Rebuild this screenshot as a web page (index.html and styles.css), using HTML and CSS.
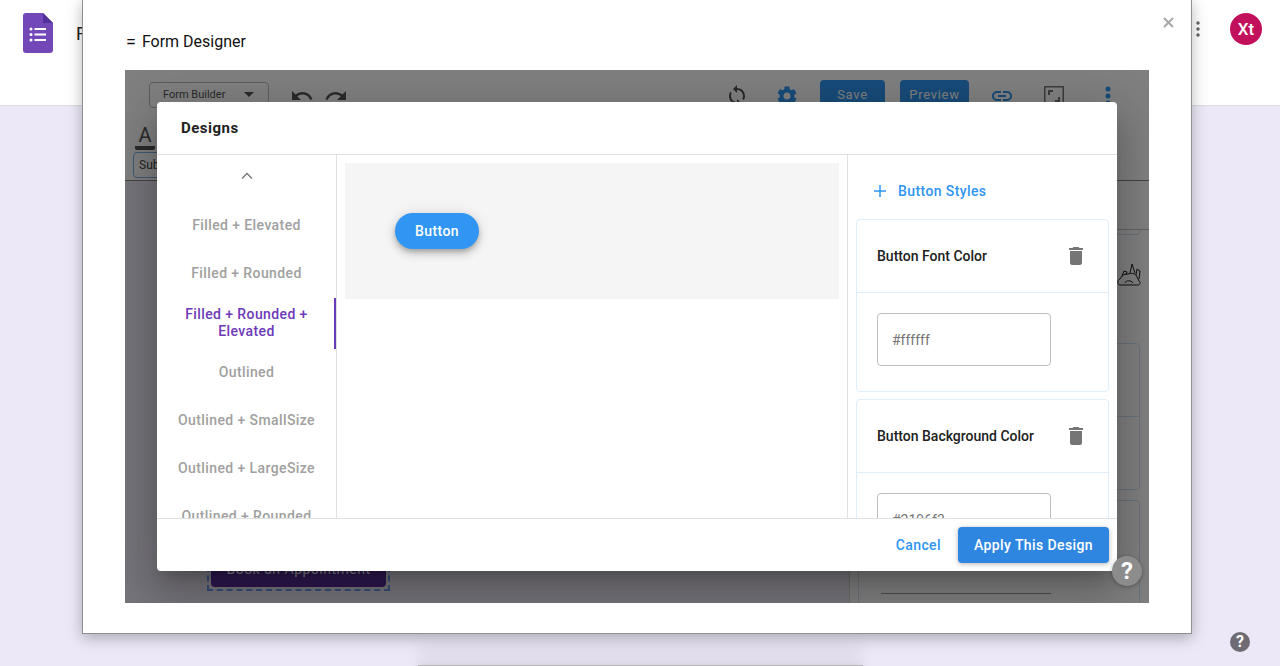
FILE: index.html
```html
<!DOCTYPE html>
<html lang="en">
<head>
  <meta charset="UTF-8">
  <title>Form Designer</title>
  <link rel="stylesheet" href="styles.css">
</head>
<body>
  <header class="topbar">
    <div class="topbar-left">
      <svg class="forms-logo" viewBox="0 0 30 40">
        <path d="M3 0h17l10 10v27a3 3 0 0 1-3 3H3a3 3 0 0 1-3-3V3a3 3 0 0 1 3-3z" fill="#7248b9"/>
        <path d="M20 0l10 10H20z" fill="#52309a"/>
        <g fill="#fff">
          <circle cx="8" cy="16" r="1.500"/><circle cx="8" cy="21.500" r="1.500"/><circle cx="8" cy="27" r="1.500"/>
          <rect x="11.500" y="15" width="11.500" height="2"/><rect x="11.500" y="20.500" width="11.500" height="2"/><rect x="11.500" y="26" width="11.500" height="2"/>
        </g>
      </svg>
      <span class="doc-title">Request Form</span>
    </div>
    <div class="topbar-right">
      <svg class="topbar-dots" viewBox="0 0 4 16"><circle cx="2" cy="2" r="1.700"/><circle cx="2" cy="8" r="1.700"/><circle cx="2" cy="14" r="1.700"/></svg>
      <div class="avatar">Xt</div>
    </div>
  </header>

  <main class="page">
    <div class="sheet"></div>
  </main>
  <div class="page-help">?</div>

  <div class="window">
    <svg class="window-close" viewBox="0 0 12 12"><path d="M1 1l10 10M11 1L1 11"/></svg>
    <div class="window-title"><span class="title-mark">=</span><span>Form Designer</span></div>

    <div class="preview">
      <div class="builder">
        <div class="toolbar">
          <div class="toolbar-row">
            <div class="toolbar-left">
              <div class="mode-select">Form Builder<span class="select-caret"></span></div>
              <svg class="tool-icon undo" viewBox="0 0 24 24"><path d="M12.5 8c-2.650 0-5.050.99-6.900 2.600L2 7v9h9l-3.620-3.620c1.390-1.160 3.160-1.880 5.120-1.880 3.540 0 6.550 2.310 7.600 5.500l2.370-.78C21.080 11.030 17.150 8 12.500 8z"/></svg>
              <svg class="tool-icon redo" viewBox="0 0 24 24"><path d="M18.400 10.600C16.550 8.990 14.150 8 11.500 8c-4.650 0-8.580 3.030-9.960 7.220L3.900 16c1.050-3.190 4.050-5.500 7.600-5.500 1.950 0 3.730.72 5.120 1.880L13 16h9V7l-3.600 3.600z"/></svg>
            </div>
            <div class="toolbar-right">
              <svg class="tool-icon" viewBox="0 0 24 24"><path d="M12 4V1L8 5l4 4V6c3.310 0 6 2.690 6 6 0 1.010-.25 1.970-.7 2.800l1.460 1.460C19.540 15.030 20 13.570 20 12c0-4.420-3.580-8-8-8zm0 14c-3.310 0-6-2.690-6-6 0-1.010.25-1.970.7-2.800L5.240 7.740C4.460 8.970 4 10.430 4 12c0 4.420 3.580 8 8 8v3l4-4-4-4v3z"/></svg>
              <svg class="tool-icon blue gear" viewBox="0 0 24 24"><path d="M19.140 12.940c.04-.3.06-.61.06-.94 0-.32-.02-.64-.07-.94l2.030-1.580c.18-.14.23-.41.12-.61l-1.920-3.320c-.12-.22-.37-.29-.59-.22l-2.390.96c-.5-.38-1.030-.7-1.620-.94l-.36-2.540c-.04-.24-.24-.41-.48-.41h-3.840c-.24 0-.43.17-.47.41l-.36 2.540c-.59.24-1.130.57-1.620.94l-2.390-.96c-.22-.08-.47 0-.59.22L2.740 8.870c-.12.21-.08.47.12.61l2.030 1.580c-.05.3-.09.63-.09.94s.02.64.07.94l-2.030 1.580c-.18.14-.23.41-.12.61l1.920 3.320c.12.22.37.29.59.22l2.390-.96c.5.38 1.030.7 1.620.94l.36 2.540c.05.24.24.41.48.41h3.840c.24 0 .44-.17.47-.41l.36-2.540c.59-.24 1.130-.56 1.620-.94l2.390.96c.22.08.47 0 .59-.22l1.920-3.320c.12-.22.07-.47-.12-.61l-2.010-1.580zM12 15.600c-1.980 0-3.600-1.620-3.600-3.600s1.620-3.600 3.600-3.600 3.600 1.620 3.600 3.600-1.620 3.600-3.600 3.600z"/></svg>
              <div class="tool-btn save">Save</div>
              <div class="tool-btn preview-btn">Preview</div>
              <svg class="tool-icon blue link" viewBox="0 0 24 24"><path d="M3.900 12c0-1.710 1.390-3.100 3.100-3.100h4V7H7c-2.760 0-5 2.240-5 5s2.240 5 5 5h4v-1.900H7c-1.710 0-3.100-1.390-3.100-3.100zM8 13h8v-2H8v2zm9-6h-4v1.900h4c1.710 0 3.100 1.390 3.100 3.100s-1.390 3.100-3.100 3.100h-4V17h4c2.760 0 5-2.240 5-5s-2.240-5-5-5z"/></svg>
              <svg class="tool-icon full" viewBox="0 0 24 24"><path d="M2 2h20v20H2zM3.500 3.500v17h17v-17zM6 6h5v2H8v3H6zM18 18h-5v-2h3v-3h2z" fill-rule="evenodd"/></svg>
              <svg class="tool-icon blue more" viewBox="0 0 24 24"><circle cx="12" cy="5" r="2.500"/><circle cx="12" cy="12" r="2.500"/><circle cx="12" cy="19" r="2.500"/></svg>
            </div>
          </div>
          <div class="font-tool"><span class="font-a">A</span></div>
          <div class="font-select">Sub</div>
        </div>

        <div class="canvas-row">
          <div class="canvas">
            <div class="book-outline"><div class="book-btn">Book an Appointment</div></div>
          </div>
          <div class="props">
            <div class="prop-rule"></div>
            <div class="prop-card prop-top"></div>
            <div class="prop-icon-row">
              <svg class="prop-icon" viewBox="0 0 24 24">
                <path d="M3 23c-3 0-3-5 0-6l2-3c2-2 4-2 6-2 3-1 6-1 8 1l3 6c2 1 1 4-1 4z"/>
                <path d="M8 21c1-3 6-3 8 0"/>
                <path d="M5 14l2-5 3 1-1 3M13 11l2-9 3 9M19 13l1-6 3 2-1 8"/>
              </svg>
            </div>
            <div class="prop-card prop-mid">
              <div class="prop-divider"></div>
            </div>
            <div class="prop-card prop-end">
              <div class="prop-line"></div>
            </div>
          </div>
        </div>
      </div>
      <div class="scrim"></div>

      <div class="dialog">
        <div class="dialog-head">Designs</div>
        <div class="dialog-body">
          <div class="tabs">
            <div class="tabs-up">
              <svg class="chevron" viewBox="0 0 12 8"><path d="M1 6.500l5-5 5 5"/></svg>
            </div>
            <div class="tab">Filled + Elevated</div>
            <div class="tab">Filled + Rounded</div>
            <div class="tab active">Filled + Rounded + Elevated</div>
            <div class="tab">Outlined</div>
            <div class="tab">Outlined + SmallSize</div>
            <div class="tab">Outlined + LargeSize</div>
            <div class="tab">Outlined + Rounded</div>
          </div>

          <div class="stage">
            <div class="stage-box">
              <div class="demo-btn">Button</div>
            </div>
          </div>

          <div class="styles">
            <div class="styles-head">
              <svg class="plus" viewBox="0 0 12 12"><path d="M6 0v12M0 6h12"/></svg>
              <span>Button Styles</span>
            </div>
            <div class="style-card">
              <div class="style-card-head">
                <span>Button Font Color</span>
                <svg class="trash" viewBox="0 0 24 24"><path d="M6 19c0 1.100.9 2 2 2h8c1.100 0 2-.9 2-2V7H6v12zM19 4h-3.500l-1-1h-5l-1 1H5v2h14V4z"/></svg>
              </div>
              <div class="style-card-body"><input class="color-input" type="text" value="#ffffff" readonly></div>
            </div>
            <div class="style-card">
              <div class="style-card-head">
                <span>Button Background Color</span>
                <svg class="trash" viewBox="0 0 24 24"><path d="M6 19c0 1.100.9 2 2 2h8c1.100 0 2-.9 2-2V7H6v12zM19 4h-3.500l-1-1h-5l-1 1H5v2h14V4z"/></svg>
              </div>
              <div class="style-card-body"><input class="color-input" type="text" value="#2196f3" readonly></div>
            </div>
          </div>
        </div>
        <div class="dialog-foot">
          <span class="cancel">Cancel</span>
          <div class="apply">Apply This Design</div>
        </div>
      </div>

      <div class="float-help">?</div>
    </div>
  </div>
</body>
</html>
```

FILE: styles.css
```css
* {
  box-sizing: border-box;
}
html, body {
  height: 666px;
  overflow: hidden;
}
body {
  margin: 0;
  background-color: #ece8f7;
  font-family: Roboto, "Liberation Sans", sans-serif;
  color: #212121;
  position: relative;
}

/* page behind the popup */
.topbar {
  display: flex;
  justify-content: space-between;
  align-items: flex-start;
  height: 106px;
  padding: 13px 18px 0 23px;
  background: white;
  border-bottom: 1px solid #dadce0;
}
.topbar-left {
  display: flex;
  align-items: center;
  gap: 23px;
}
.forms-logo {
  width: 30px;
  height: 40px;
}
.doc-title {
  font-size: 18px;
  white-space: nowrap;
}
.topbar-right {
  display: flex;
  align-items: center;
  gap: 30px;
}
.topbar-dots {
  width: 4px;
  height: 16px;
  fill: #5f6368;
}
.avatar {
  width: 32px;
  height: 32px;
  border-radius: 50%;
  background: #c2105c;
  color: white;
  font-size: 17px;
  font-weight: 500;
  line-height: 32px;
  text-align: center;
}
.page {
  display: flex;
  justify-content: center;
  padding-top: 559px;
}
.sheet {
  width: 445px;
  height: 20px;
  background: #b9b7bd;
  box-shadow: 0 -20px 14px rgba(0, 0, 0, 0.05), 0 0 8px rgba(0, 0, 0, 0.1);
}
.page-help {
  position: absolute;
  left: 1230px;
  top: 632px;
  width: 20px;
  height: 20px;
  border-radius: 50%;
  background: #6f6b75;
  color: white;
  font-size: 16px;
  font-weight: 700;
  line-height: 20px;
  text-align: center;
}

/* popup window */
.window {
  position: absolute;
  left: 82px;
  top: -1px;
  width: 1110px;
  height: 635px;
  padding: 0 42px;
  background: white;
  border: 1px solid #8f8f94;
  box-shadow: 0 4px 14px rgba(0, 0, 0, 0.28);
}
.window-close {
  position: absolute;
  right: 17px;
  top: 17px;
  width: 11px;
  height: 11px;
  fill: none;
  stroke: #a8a8a8;
  stroke-width: 2.200;
}
.window-title {
  display: flex;
  gap: 6px;
  height: 70px;
  padding: 32px 0 0 1px;
  font-size: 16px;
  line-height: 20px;
  color: #111;
}
.title-mark {
  font-size: 18px;
}
.preview {
  position: relative;
  height: 533px;
  overflow: hidden;
}
.scrim {
  position: absolute;
  inset: 0;
  background: rgba(0, 0, 0, 0.5);
}

/* builder under the scrim */
.builder {
  display: flex;
  flex-direction: column;
  height: 100%;
}
.toolbar {
  height: 111px;
  padding: 10px 29px 0 24px;
  background: white;
  border-bottom: 1px solid #888;
}
.toolbar-row {
  display: flex;
  justify-content: space-between;
  height: 32px;
}
.toolbar-left, .toolbar-right {
  display: flex;
  align-items: flex-start;
}
.mode-select {
  display: flex;
  justify-content: space-between;
  align-items: center;
  width: 120px;
  height: 26px;
  margin-top: 2px;
  padding: 0 14px 2px 13px;
  border: 1px solid #bbb;
  border-radius: 4px;
  font-size: 11px;
  color: #555;
}
.select-caret {
  border-left: 5px solid transparent;
  border-right: 5px solid transparent;
  border-top: 5px solid #555;
}
.tool-icon {
  width: 24px;
  height: 24px;
  margin-top: 4px;
  fill: #555;
}
.tool-icon.undo {
  margin-left: 21px;
}
.tool-icon.redo {
  margin-left: 10px;
}
.tool-icon.blue {
  fill: #3196f3;
}
.tool-icon.gear {
  margin-left: 26px;
}
.tool-icon.link {
  margin-left: 21px;
}
.tool-icon.full {
  margin-left: 28px;
  fill: #777;
}
.tool-icon.more {
  margin-left: 30px;
}
.tool-btn {
  height: 32px;
  padding: 0;
  background: #3196f3;
  border-radius: 4px;
  color: white;
  font-size: 13px;
  font-weight: 400;
  letter-spacing: 0.7px;
  line-height: 30px;
  text-align: center;
}
.tool-btn.save {
  width: 65px;
  margin-left: 21px;
}
.tool-btn.preview-btn {
  width: 69px;
  margin-left: 15px;
}
.font-tool {
  height: 40px;
  margin-left: -14px;
  padding-top: 13px;
}
.font-a {
  display: inline-block;
  width: 20px;
  border-bottom: 4px solid #555;
  border-radius: 0 0 2px 2px;
  font-size: 20px;
  line-height: 21px;
  color: #555;
  text-align: center;
}
.font-select {
  width: 70px;
  height: 26px;
  margin-left: -16px;
  padding: 0 5px;
  border: 1px solid #7fb2e5;
  border-radius: 4px;
  font-size: 12px;
  line-height: 24px;
  color: #444;
}
.canvas-row {
  display: flex;
  flex: 1;
  min-height: 0;
}
.canvas {
  flex: 1;
  display: flex;
  flex-direction: column;
  justify-content: flex-end;
  align-items: flex-start;
  padding: 0 0 12px 82px;
  background: #ece8f7;
}
.book-outline {
  padding: 2px;
  border: 2px dashed #6b9ef0;
}
.book-btn {
  width: 175px;
  height: 36px;
  background: #5a2e9e;
  border-radius: 4px;
  color: white;
  font-size: 14px;
  font-weight: 400;
  letter-spacing: 0.5px;
  line-height: 36px;
  text-align: center;
}
.props {
  width: 300px;
  padding: 0 9px 0 8px;
  background: white;
  border-left: 1px solid #d8d8d8;
}
.prop-rule {
  height: 49px;
  margin: 0 -9px 0 -8px;
  border-bottom: 1px solid #c4c4c4;
}
.prop-card {
  border: 1px solid #d3e3f2;
  border-radius: 4px;
}
.prop-top {
  height: 5px;
  border-top: none;
  border-left: none;
  border-radius: 0 0 4px 0;
}
.prop-icon-row {
  display: flex;
  justify-content: flex-end;
  height: 108px;
  padding-top: 27px;
  margin-right: -1px;
}
.prop-icon {
  width: 24px;
  height: 24px;
  fill: none;
  stroke: #222;
  stroke-width: 1;
}
.prop-mid {
  height: 147px;
  padding-top: 72px;
}
.prop-divider {
  border-top: 1px solid #d3e3f2;
}
.prop-end {
  height: 130px;
  margin-top: 10px;
  padding: 92px 0 0 22px;
}
.prop-line {
  width: 170px;
  border-top: 1px solid #999;
}

/* designs dialog */
.dialog {
  position: absolute;
  left: 32px;
  top: 32px;
  display: flex;
  flex-direction: column;
  width: 960px;
  height: 469px;
  background: white;
  border-radius: 4px;
  box-shadow: 0 11px 15px -7px rgba(0, 0, 0, 0.2), 0 24px 38px 3px rgba(0, 0, 0, 0.14), 0 9px 46px 8px rgba(0, 0, 0, 0.12);
  overflow: hidden;
}
.dialog-head {
  height: 53px;
  padding: 0 24px;
  border-bottom: 1px solid #e0e0e0;
  font-size: 15px;
  font-weight: 700;
  letter-spacing: 0.5px;
  line-height: 52px;
}
.dialog-body {
  display: flex;
  flex: 1;
  min-height: 0;
}
.tabs {
  width: 180px;
  flex-shrink: 0;
  border-right: 1px solid #e0e0e0;
  overflow: hidden;
}
.tabs-up {
  display: flex;
  justify-content: center;
  height: 46px;
  padding-top: 17px;
}
.chevron {
  width: 12px;
  height: 8px;
  fill: none;
  stroke: #757575;
  stroke-width: 1.300;
}
.tab {
  display: flex;
  align-items: center;
  justify-content: center;
  height: 48px;
  padding: 0 20px;
  color: #a0a0a0;
  font-size: 14px;
  font-weight: 500;
  letter-spacing: 0.4px;
  line-height: 17px;
  text-align: center;
  white-space: nowrap;
}
.tab.active {
  height: 51px;
  margin: 1px 0 -1px;
  color: #6e39b8;
  border-right: 2px solid #673ab7;
  white-space: normal;
  padding: 0 18px 2px 20px;
}
.stage {
  flex: 1;
  padding: 8px;
  border-right: 1px solid #e0e0e0;
}
.stage-box {
  height: 136px;
  padding: 50px;
  background: #f5f5f5;
}
.demo-btn {
  width: 84px;
  height: 36px;
  background: #3196f3;
  border-radius: 18px;
  box-shadow: 0 3px 5px -1px rgba(0, 0, 0, 0.2), 0 5px 8px rgba(0, 0, 0, 0.14), 0 1px 14px rgba(0, 0, 0, 0.12);
  color: white;
  font-size: 14px;
  font-weight: 500;
  letter-spacing: 0.4px;
  line-height: 36px;
  text-align: center;
}
.styles {
  width: 269px;
  flex-shrink: 0;
  padding: 0 8px;
  overflow: hidden;
}
.styles-head {
  display: flex;
  align-items: center;
  gap: 12px;
  height: 64px;
  padding: 8px 0 0 18px;
  color: #2f95f3;
  font-size: 14px;
  font-weight: 500;
  letter-spacing: 0.4px;
}
.plus {
  width: 12px;
  height: 12px;
  fill: none;
  stroke: #2f95f3;
  stroke-width: 1.500;
}
.style-card {
  margin-bottom: 7px;
  border: 1px solid #e0eefb;
  border-radius: 4px;
}
.style-card-head {
  display: flex;
  justify-content: space-between;
  align-items: center;
  height: 73px;
  padding: 0 20px;
  border-bottom: 1px solid #e0eefb;
  font-size: 14px;
  font-weight: 500;
}
.trash {
  width: 24px;
  height: 24px;
  fill: #757575;
}
.style-card-body {
  padding: 20px 20px 25px;
}
.color-input {
  display: block;
  width: 174px;
  height: 53px;
  padding: 0 14px;
  border: 1px solid #bdbdbd;
  border-radius: 4px;
  font-family: Roboto, "Liberation Sans", sans-serif;
  font-size: 14px;
  color: #757575;
}
.dialog-foot {
  display: flex;
  justify-content: flex-end;
  align-items: center;
  gap: 17px;
  height: 53px;
  padding: 0 8px;
  border-top: 1px solid #e0e0e0;
}
.cancel {
  color: #2f95f3;
  font-size: 14px;
  font-weight: 500;
  letter-spacing: 0.4px;
}
.apply {
  width: 151px;
  height: 36px;
  background: #2e86e0;
  border-radius: 4px;
  box-shadow: 0 1px 5px rgba(0, 0, 0, 0.3);
  color: white;
  font-size: 14px;
  font-weight: 500;
  letter-spacing: 0.4px;
  line-height: 36px;
  text-align: center;
}
.float-help {
  position: absolute;
  left: 987px;
  top: 486px;
  width: 30px;
  height: 30px;
  border-radius: 50%;
  background: #8c8c8c;
  box-shadow: 0 1px 4px rgba(0, 0, 0, 0.3);
  color: white;
  font-size: 24px;
  font-weight: 700;
  line-height: 30px;
  text-align: center;
}
```
